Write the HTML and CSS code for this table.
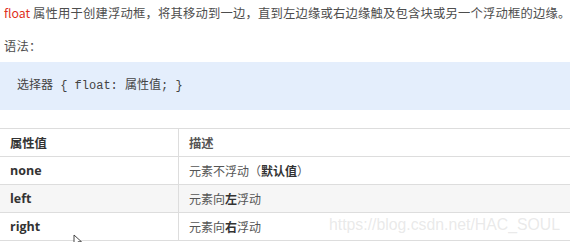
FILE: index.html
```html
<!DOCTYPE html>
<html lang="zh">
<head>
<meta charset="utf-8">
<link rel="stylesheet" href="styles.css">
</head>
<body>
<div class="page">
  <p class="intro"><span class="kw">float</span> 属性用于创建浮动框，将其移动到一边，直到左边缘或右边缘触及包含块或另一个浮动框的边缘。</p>
  <p class="label">语法：</p>
  <div class="code">选择器 { float: 属性值; }</div>
  <table class="props">
    <thead>
      <tr><th class="c1">属性值</th><th class="c2">描述</th></tr>
    </thead>
    <tbody>
      <tr><td class="c1 val">none</td><td class="c2">元素不浮动（<b>默认值</b>）</td></tr>
      <tr class="alt"><td class="c1 val">left</td><td class="c2">元素向<b>左</b>浮动</td></tr>
      <tr><td class="c1 val">right</td><td class="c2">元素向<b>右</b>浮动</td></tr>
    </tbody>
  </table>
  <div class="watermark">https://blog.csdn.net/HAC_SOUL</div>
  <svg class="cursor" width="10" height="12" viewBox="0 0 10 12"><path d="M1 1 L1 11 L3.5 8.5 L5.5 12 L7 11.3 L5 7.8 L8.5 7.8 Z" fill="#fff" stroke="#333" stroke-width="0.9"/></svg>
</div>
</body>
</html>
```
FILE: styles.css
```css
html, body {
  margin: 0;
  padding: 0;
  background: #fff;
}
.page {
  position: relative;
  width: 570px;
  height: 242px;
  overflow: hidden;
  font-family: "Noto Sans CJK SC", "Liberation Sans", sans-serif;
  color: #4d4d4d;
}
.intro {
  margin: 0;
  padding: 4px 0 0 4px;
  font-size: 12.3px;
  line-height: 18px;
  white-space: nowrap;
  letter-spacing: 0.2px;
}
.kw {
  color: #e0301e;
  letter-spacing: 0;
}
.label {
  margin: 0;
  padding: 15px 0 0 4px;
  font-size: 12.3px;
  line-height: 18px;
  letter-spacing: 0.2px;
}
.code {
  margin-top: 7px;
  height: 48px;
  box-sizing: border-box;
  padding: 15px 0 0 17px;
  background: #e4eefc;
  font-family: "Liberation Mono", "Noto Sans CJK SC", monospace;
  font-size: 12px;
  line-height: 18px;
  color: #444;
}
.props {
  margin-top: 18px;
  width: 570px;
  border-collapse: collapse;
  font-size: 12px;
}
.props th, .props td {
  border-top: 1px solid #dddddd;
  border-bottom: 1px solid #dddddd;
  height: 27px;
  padding: 0 0 0 10px;
  text-align: left;
  vertical-align: middle;
}
.props .c1 {
  width: 168px;
  border-right: 1px solid #dddddd;
}
.props th {
  font-weight: 700;
  color: #333;
  font-size: 12.3px;
}
.props .val {
  font-family: "Open Sans", "Noto Sans", sans-serif;
  font-weight: 700;
  color: #333;
  font-size: 12.5px;
}
.props .c2 {
  color: #555;
}
.props .c2 b {
  color: #333;
}
.props tr.alt td {
  background: #f6f6f6;
}
.watermark {
  position: absolute;
  left: 329px;
  top: 215px;
  font-family: "Liberation Sans", Arial, sans-serif;
  font-size: 15.8px;
  line-height: 20px;
  color: rgba(200, 200, 200, 0.4);
}
.cursor {
  position: absolute;
  left: 73px;
  top: 234px;
}
```
